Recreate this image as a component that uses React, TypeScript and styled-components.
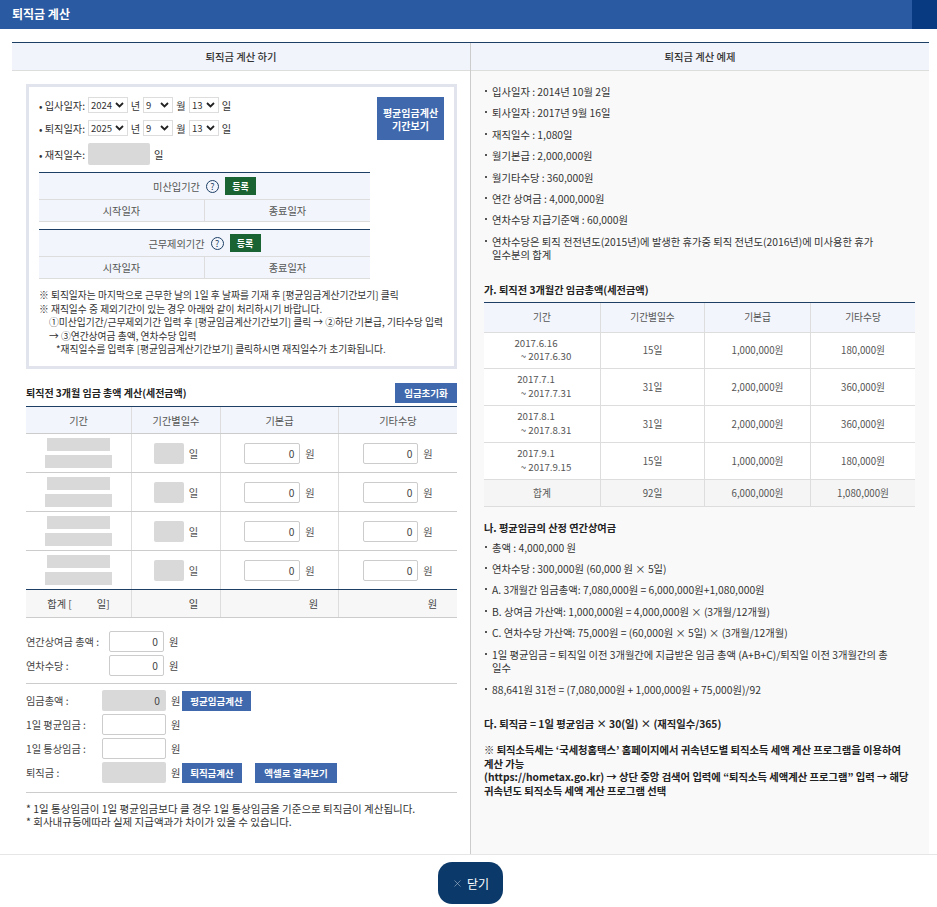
import { createGlobalStyle, styled } from "styled-components";
import { X } from "lucide-react";

const GlobalStyle = createGlobalStyle`
  html, body {
    margin: 0;
    padding: 0;
    background: #fff;
  }
  body {
    font-family: "Noto Sans CJK KR", "Noto Sans", sans-serif;
    font-size: 10.2px;
    color: #333;
  }
  * {
    box-sizing: border-box;
  }
`;

const chevron = encodeURIComponent(
  '<svg xmlns="http://www.w3.org/2000/svg" width="9" height="6" viewBox="0 0 9 6"><path d="M1 1l3.5 3.5L8 1" fill="none" stroke="#222" stroke-width="1.8"/></svg>'
);

const Page = styled.div`
  width: 937px;
  height: 907px;
  overflow: hidden;
  display: flex;
  flex-direction: column;
`;

const TopBar = styled.header`
  height: 29px;
  flex: none;
  display: flex;
  background: #2a5aa1;
`;

const TopTitle = styled.h1`
  flex: 1;
  margin: 0;
  padding-left: 12px;
  font-size: 12px;
  line-height: 28px;
  font-weight: 700;
  color: #fff;
`;

const TopCorner = styled.div`
  width: 25px;
  background: #073a80;
`;

const Columns = styled.main`
  height: 812px;
  flex: none;
  margin: 13px 8px 0 12px;
  display: grid;
  grid-template-columns: 458px 459px;
  border-top: 1px solid #1d3f66;
`;

const LeftPane = styled.section`
  display: flex;
  flex-direction: column;
`;

const RightPane = styled.section`
  display: flex;
  flex-direction: column;
  background: #f9f9f9;
  border-left: 1px solid #ccc;
`;

const PaneTitle = styled.h2`
  height: 28px;
  flex: none;
  margin: 0;
  font-size: 10.3px;
  line-height: 28px;
  font-weight: 500;
  text-align: center;
  color: #333;
  background: #f1f4fa;
  border-bottom: 1px solid #ddd;
`;

const LeftBody = styled.div`
  padding: 13px 13px 0 14px;
`;

const SetupBox = styled.div`
  height: 285px;
  padding: 10px 10px 0 10px;
  border: 3px solid #e1e4ec;
`;

const SetupTop = styled.div`
  display: flex;
  justify-content: space-between;
`;

const DateRows = styled.div`
  display: flex;
  flex-direction: column;
  gap: 7px;
`;

const DateRow = styled.div`
  height: 16px;
  display: flex;
  align-items: center;
  color: #333;
`;

const DateLabel = styled.span`
  width: 49px;
  white-space: nowrap;
`;

const DateSelect = styled.select<{ $w: number }>`
  width: ${(p) => p.$w}px;
  height: 16px;
  padding: 0 0 0 2px;
  appearance: none;
  border: 1px solid #ddd;
  background: #fff url("data:image/svg+xml,${chevron}") no-repeat right 3px center;
  font-family: inherit;
  font-size: 9.5px;
  color: #333;
`;

const DateUnit = styled.span<{ $w: number }>`
  width: ${(p) => p.$w}px;
  text-align: center;
`;

const TenureRow = styled.div`
  height: 22px;
  display: flex;
  align-items: center;
`;

const TenureInput = styled.div`
  width: 62px;
  height: 22px;
  margin-right: 4px;
  background: #d9d9d9;
  border-radius: 2px;
`;

const PeriodBtn = styled.button`
  width: 67px;
  height: 43px;
  padding: 0;
  border: 0;
  background: #4069ad;
  color: #fff;
  font-family: inherit;
  font-size: 10px;
  font-weight: 700;
  line-height: 13px;
`;

const SubTable = styled.div`
  width: 331px;
  margin-top: 7px;
  border-top: 1px solid #1d3f66;
  background: #f2f5fb;
`;

const SubHead = styled.div`
  height: 27px;
  display: flex;
  align-items: center;
  justify-content: center;
  gap: 6px;
  border-bottom: 1px solid #ddd;
  color: #555;
`;

const HelpMark = styled.span`
  width: 13px;
  height: 13px;
  display: flex;
  align-items: center;
  justify-content: center;
  border: 1px solid #1d3f66;
  border-radius: 50%;
  font-size: 9px;
  color: #1d3f66;
`;

const GreenBtn = styled.span`
  width: 31px;
  height: 18px;
  display: flex;
  align-items: center;
  justify-content: center;
  background: #1a6332;
  color: #fff;
  font-size: 9px;
  font-weight: 700;
`;

const SubCols = styled.div`
  height: 22px;
  display: grid;
  grid-template-columns: 165px 166px;
  border-bottom: 1px solid #ddd;
  color: #555;
`;

const SubCol = styled.span`
  line-height: 21px;
  text-align: center;

  & + & {
    border-left: 1px solid #ddd;
  }
`;

const Notes = styled.div`
  margin-top: 10px;
  font-size: 9.75px;
  line-height: 13.6px;
  color: #333;
  white-space: nowrap;
`;

const NoteLine = styled.div<{ $indent?: number }>`
  padding-left: ${(p) => p.$indent ?? 0}px;
`;

const SectionHead = styled.div`
  height: 19px;
  margin-top: 14px;
  display: flex;
  align-items: center;
  justify-content: space-between;
`;

const SectionTitle = styled.h3`
  margin: 0;
  font-size: 10px;
  font-weight: 700;
  color: #222;
`;

const BlueBtn = styled.button<{ $w: number; $ml?: number }>`
  width: ${(p) => p.$w}px;
  height: 20px;
  margin-left: ${(p) => p.$ml ?? 0}px;
  padding: 0;
  border: 0;
  background: #4069ad;
  color: #fff;
  font-family: inherit;
  font-size: 9.5px;
  font-weight: 700;
`;

const WageTable = styled.div`
  margin-top: 4px;
  border-top: 1px solid #1d3f66;
`;

const WageRow = styled.div<{ $h: number; $bg?: string; $line?: string }>`
  height: ${(p) => p.$h}px;
  display: grid;
  grid-template-columns: 105px 89px 118px 119px;
  background: ${(p) => p.$bg ?? "#fff"};
  border-bottom: 1px solid ${(p) => p.$line ?? "#ccc"};
`;

const WageCell = styled.div`
  display: flex;
  flex-direction: column;
  align-items: center;
  justify-content: center;
  gap: 4px;
  color: #555;

  & + & {
    border-left: 1px solid #ddd;
  }
`;

const InlineCell = styled(WageCell)`
  flex-direction: row;
  gap: 5px;
`;

const SumCell = styled(WageCell)<{ $pad?: number }>`
  flex-direction: row;
  justify-content: ${(p) => (p.$pad ? "flex-end" : "center")};
  padding-right: ${(p) => p.$pad ?? 0}px;
  color: #444;
`;

const GrayBar = styled.div<{ $w: number }>`
  width: ${(p) => p.$w}px;
  height: 13px;
  background: #d9d9d9;
`;

const GrayBox = styled.div<{ $w: number; $h?: number }>`
  width: ${(p) => p.$w}px;
  height: ${(p) => p.$h ?? 21}px;
  padding-right: 6px;
  text-align: right;
  line-height: ${(p) => p.$h ?? 21}px;
  background: #d9d9d9;
  border-radius: 2px;
`;

const AmountInput = styled.div<{ $w: number; $h?: number }>`
  width: ${(p) => p.$w}px;
  height: ${(p) => p.$h ?? 21}px;
  padding-right: 5px;
  text-align: right;
  line-height: ${(p) => (p.$h ?? 21) - 2}px;
  background: #fff;
  border: 1px solid #ccc;
  border-radius: 2px;
  color: #444;
`;

const FormGroup = styled.div<{ $top: number }>`
  margin-top: ${(p) => p.$top}px;
  display: flex;
  flex-direction: column;
  gap: 3px;
`;

const FormRow = styled.div`
  height: 21px;
  display: flex;
  align-items: center;
  color: #444;
`;

const FormLabel = styled.span<{ $w: number }>`
  width: ${(p) => p.$w}px;
  flex: none;
  white-space: nowrap;
`;

const FormUnit = styled.span<{ $w: number }>`
  width: ${(p) => p.$w}px;
  flex: none;
  padding-left: 5px;
`;

const Rule = styled.hr<{ $top: number }>`
  height: 1px;
  margin: ${(p) => p.$top}px 0 0;
  border: 0;
  background: #ccc;
`;

const FootNotes = styled.div`
  margin-top: 9px;
  font-size: 10.5px;
  line-height: 13px;
  color: #333;
`;

const RightBody = styled.div`
  padding: 14px 13px 0 13px;
`;

const BulletList = styled.ul<{ $top?: number }>`
  margin: ${(p) => p.$top ?? 0}px 0 0;
  padding: 0;
  list-style: none;
  display: flex;
  flex-direction: column;
  gap: 8px;
`;

const Bullet = styled.li`
  position: relative;
  padding: 0 10px 0 8px;
  font-size: 10.3px;
  line-height: 13.4px;
  word-break: keep-all;
  color: #333;

  &::before {
    content: "";
    position: absolute;
    left: 1px;
    top: 5px;
    width: 2px;
    height: 2px;
    background: #555;
  }
`;

const ExampleHead = styled.h3<{ $top: number }>`
  margin: ${(p) => p.$top}px 0 0;
  font-size: 10.2px;
  line-height: 14px;
  font-weight: 700;
  color: #222;
`;

const ExampleTable = styled.div`
  width: 431px;
  margin-top: 5px;
  border-top: 1px solid #1d3f66;
`;

const ExampleRow = styled.div<{ $h: number; $bg?: string }>`
  height: ${(p) => p.$h}px;
  display: grid;
  grid-template-columns: 116px 104px 106px 105px;
  background: ${(p) => p.$bg ?? "#fff"};
  border-bottom: 1px solid #ddd;
  font-size: 9.7px;
  color: #555;
`;

const ExampleCell = styled.div`
  display: flex;
  flex-direction: column;
  align-items: center;
  justify-content: center;

  & + & {
    border-left: 1px solid #ddd;
  }
`;

const PeriodFrom = styled.div`
  width: 100%;
  padding-right: 12px;
  line-height: 13.5px;
  text-align: center;
`;

const PeriodTo = styled.div`
  width: 100%;
  padding-left: 8px;
  line-height: 13.5px;
  text-align: center;
`;

const BoldNote = styled.p<{ $top: number }>`
  margin: ${(p) => p.$top}px 0 0;
  font-size: 10.3px;
  line-height: 13.4px;
  font-weight: 700;
  word-break: keep-all;
  color: #222;
`;

const Footer = styled.footer`
  flex: 1;
  display: flex;
  justify-content: center;
  padding: 7px 0 0 4px;
  border-top: 1px solid #e6e6e6;
`;

const CloseBtn = styled.button`
  width: 65px;
  height: 42px;
  display: flex;
  align-items: center;
  justify-content: center;
  gap: 4px;
  border: 0;
  border-radius: 14px;
  background: #0b3a6a;
  color: #fff;
  font-family: inherit;
  font-size: 12px;
`;

const dateRows = [
  { label: "• 입사일자:", year: "2024" },
  { label: "• 퇴직일자:", year: "2025" },
];

const examples = [
  ["2017.6.16", "~ 2017.6.30", "15일", "1,000,000원", "180,000원"],
  ["2017.7.1", "~ 2017.7.31", "31일", "2,000,000원", "360,000원"],
  ["2017.8.1", "~ 2017.8.31", "31일", "2,000,000원", "360,000원"],
  ["2017.9.1", "~ 2017.9.15", "15일", "1,000,000원", "180,000원"],
];

const exampleHeights = [36, 37, 37, 37];

const topBullets = [
  "입사일자 : 2014년 10월 2일",
  "퇴사일자 : 2017년 9월 16일",
  "재직일수 : 1,080일",
  "월기본급 : 2,000,000원",
  "월기타수당 : 360,000원",
  "연간 상여금 : 4,000,000원",
  "연차수당 지급기준액 : 60,000원",
  "연차수당은 퇴직 전전년도(2015년)에 발생한 휴가중 퇴직 전년도(2016년)에 미사용한 휴가 일수분의 합계",
];

const averageBullets = [
  "총액 : 4,000,000 원",
  "연차수당 : 300,000원 (60,000 원 × 5일)",
  "A. 3개월간 임금총액: 7,080,000원 = 6,000,000원+1,080,000원",
  "B. 상여금 가산액: 1,000,000원 = 4,000,000원 × (3개월/12개월)",
  "C. 연차수당 가산액: 75,000원 = (60,000원 × 5일) × (3개월/12개월)",
  "1일 평균임금 = 퇴직일 이전 3개월간에 지급받은 임금 총액 (A+B+C)/퇴직일 이전 3개월간의 총 일수",
  "88,641원 31전 = (7,080,000원 + 1,000,000원 + 75,000원)/92",
];

const SubPeriod = ({ title }: { title: string }) => (
  <SubTable>
    <SubHead>
      <span>{title}</span>
      <HelpMark>?</HelpMark>
      <GreenBtn>등록</GreenBtn>
    </SubHead>
    <SubCols>
      <SubCol>시작일자</SubCol>
      <SubCol>종료일자</SubCol>
    </SubCols>
  </SubTable>
);

const App = () => {
  return (
    <Page>
      <GlobalStyle />
      <TopBar>
        <TopTitle>퇴직금 계산</TopTitle>
        <TopCorner />
      </TopBar>
      <Columns>
        <LeftPane>
          <PaneTitle>퇴직금 계산 하기</PaneTitle>
          <LeftBody>
            <SetupBox>
              <SetupTop>
                <DateRows>
                  {dateRows.map((row) => (
                    <DateRow key={row.label}>
                      <DateLabel>{row.label}</DateLabel>
                      <DateSelect $w={40} defaultValue={row.year}>
                        <option>{row.year}</option>
                      </DateSelect>
                      <DateUnit $w={15}>년</DateUnit>
                      <DateSelect $w={30} defaultValue="9">
                        <option>9</option>
                      </DateSelect>
                      <DateUnit $w={16}>월</DateUnit>
                      <DateSelect $w={30} defaultValue="13">
                        <option>13</option>
                      </DateSelect>
                      <DateUnit $w={15}>일</DateUnit>
                    </DateRow>
                  ))}
                  <TenureRow>
                    <DateLabel>• 재직일수:</DateLabel>
                    <TenureInput />
                    <span>일</span>
                  </TenureRow>
                </DateRows>
                <PeriodBtn>
                  평균임금계산
                  <br />
                  기간보기
                </PeriodBtn>
              </SetupTop>
              <SubPeriod title="미산입기간" />
              <SubPeriod title="근무제외기간" />
              <Notes>
                <NoteLine>※ 퇴직일자는 마지막으로 근무한 날의 1일 후 날짜를 기재 후 [평균임금계산기간보기] 클릭</NoteLine>
                <NoteLine>※ 재직일수 중 제외기간이 있는 경우 아래와 같이 처리하시기 바랍니다.</NoteLine>
                <NoteLine $indent={10}>①미산입기간/근무제외기간 입력 후 [평균임금계산기간보기] 클릭 → ②하단 기본급, 기타수당 입력</NoteLine>
                <NoteLine $indent={10}>→ ③연간상여금 총액, 연차수당 입력</NoteLine>
                <NoteLine $indent={17}>*재직일수를 입력후 [평균임금계산기간보기] 클릭하시면 재직일수가 초기화됩니다.</NoteLine>
              </Notes>
            </SetupBox>

            <SectionHead>
              <SectionTitle>퇴직전 3개월 임금 총액 계산(세전금액)</SectionTitle>
              <BlueBtn $w={62}>임금초기화</BlueBtn>
            </SectionHead>
            <WageTable>
              <WageRow $h={27} $bg="#f2f5fb">
                <WageCell>기간</WageCell>
                <WageCell>기간별일수</WageCell>
                <WageCell>기본급</WageCell>
                <WageCell>기타수당</WageCell>
              </WageRow>
              {[0, 1, 2, 3].map((i) => (
                <WageRow key={i} $h={39} $line={i === 3 ? "#1d3f66" : "#ccc"}>
                  <WageCell>
                    <GrayBar $w={63} />
                    <GrayBar $w={67} />
                  </WageCell>
                  <InlineCell>
                    <GrayBox $w={30} />
                    <span>일</span>
                  </InlineCell>
                  <InlineCell>
                    <AmountInput $w={56}>0</AmountInput>
                    <span>원</span>
                  </InlineCell>
                  <InlineCell>
                    <AmountInput $w={55}>0</AmountInput>
                    <span>원</span>
                  </InlineCell>
                </WageRow>
              ))}
              <WageRow $h={28} $bg="#f7f7f7">
                <SumCell>합계 [&nbsp;&nbsp;&nbsp;&nbsp;&nbsp;&nbsp;&nbsp;&nbsp;&nbsp;&nbsp;&nbsp;일]</SumCell>
                <SumCell $pad={22}>일</SumCell>
                <SumCell $pad={20}>원</SumCell>
                <SumCell $pad={20}>원</SumCell>
              </WageRow>
            </WageTable>

            <FormGroup $top={13}>
              <FormRow>
                <FormLabel $w={83}>연간상여금 총액 :</FormLabel>
                <AmountInput $w={55}>0</AmountInput>
                <FormUnit $w={20}>원</FormUnit>
              </FormRow>
              <FormRow>
                <FormLabel $w={83}>연차수당 :</FormLabel>
                <AmountInput $w={55}>0</AmountInput>
                <FormUnit $w={20}>원</FormUnit>
              </FormRow>
            </FormGroup>
            <Rule $top={7} />
            <FormGroup $top={6}>
              <FormRow>
                <FormLabel $w={76}>임금총액 :</FormLabel>
                <GrayBox $w={64}>0</GrayBox>
                <FormUnit $w={16}>원</FormUnit>
                <BlueBtn $w={69}>평균임금계산</BlueBtn>
              </FormRow>
              <FormRow>
                <FormLabel $w={76}>1일 평균임금 :</FormLabel>
                <AmountInput $w={64} />
                <FormUnit $w={16}>원</FormUnit>
              </FormRow>
              <FormRow>
                <FormLabel $w={76}>1일 통상임금 :</FormLabel>
                <AmountInput $w={64} />
                <FormUnit $w={16}>원</FormUnit>
              </FormRow>
              <FormRow>
                <FormLabel $w={76}>퇴직금 :</FormLabel>
                <GrayBox $w={64} />
                <FormUnit $w={16}>원</FormUnit>
                <BlueBtn $w={60}>퇴직금계산</BlueBtn>
                <BlueBtn $w={82} $ml={13}>엑셀로 결과보기</BlueBtn>
              </FormRow>
            </FormGroup>
            <Rule $top={9} />
            <FootNotes>
              <div>* 1일 통상임금이 1일 평균임금보다 클 경우 1일 통상임금을 기준으로 퇴직금이 계산됩니다.</div>
              <div>* 회사내규등에따라 실제 지급액과가 차이가 있을 수 있습니다.</div>
            </FootNotes>
          </LeftBody>
        </LeftPane>

        <RightPane>
          <PaneTitle>퇴직금 계산 예제</PaneTitle>
          <RightBody>
            <BulletList>
              {topBullets.map((text) => (
                <Bullet key={text}>{text}</Bullet>
              ))}
            </BulletList>
            <ExampleHead $top={21}>가. 퇴직전 3개월간 임금총액(세전금액)</ExampleHead>
            <ExampleTable>
              <ExampleRow $h={30} $bg="#f2f5fb">
                <ExampleCell>기간</ExampleCell>
                <ExampleCell>기간별일수</ExampleCell>
                <ExampleCell>기본급</ExampleCell>
                <ExampleCell>기타수당</ExampleCell>
              </ExampleRow>
              {examples.map((row, i) => (
                <ExampleRow key={row[0]} $h={exampleHeights[i]}>
                  <ExampleCell>
                    <PeriodFrom>{row[0]}</PeriodFrom>
                    <PeriodTo>{row[1]}</PeriodTo>
                  </ExampleCell>
                  <ExampleCell>{row[2]}</ExampleCell>
                  <ExampleCell>{row[3]}</ExampleCell>
                  <ExampleCell>{row[4]}</ExampleCell>
                </ExampleRow>
              ))}
              <ExampleRow $h={27} $bg="#f5f5f5">
                <ExampleCell>합계</ExampleCell>
                <ExampleCell>92일</ExampleCell>
                <ExampleCell>6,000,000원</ExampleCell>
                <ExampleCell>1,080,000원</ExampleCell>
              </ExampleRow>
            </ExampleTable>
            <ExampleHead $top={14}>나. 평균임금의 산정 연간상여금</ExampleHead>
            <BulletList $top={6}>
              {averageBullets.map((text) => (
                <Bullet key={text}>{text}</Bullet>
              ))}
            </BulletList>
            <BoldNote $top={21}>다. 퇴직금 = 1일 평균임금 × 30(일) × (재직일수/365)</BoldNote>
            <BoldNote $top={13}>
              ※ 퇴직소득세는 ‘국세청홈택스’ 홈페이지에서 귀속년도별 퇴직소득 세액 계산 프로그램을 이용하여 계산 가능
              <br />
              (https://hometax.go.kr) → 상단 중앙 검색어 입력에 “퇴직소득 세액계산 프로그램” 입력 → 해당 귀속년도 퇴직소득 세액 계산 프로그램 선택
            </BoldNote>
          </RightBody>
        </RightPane>
      </Columns>
      <Footer>
        <CloseBtn>
          <X size={11} strokeWidth={1.2} color="#b9c6d6" />
          닫기
        </CloseBtn>
      </Footer>
    </Page>
  );
};

export default App;
